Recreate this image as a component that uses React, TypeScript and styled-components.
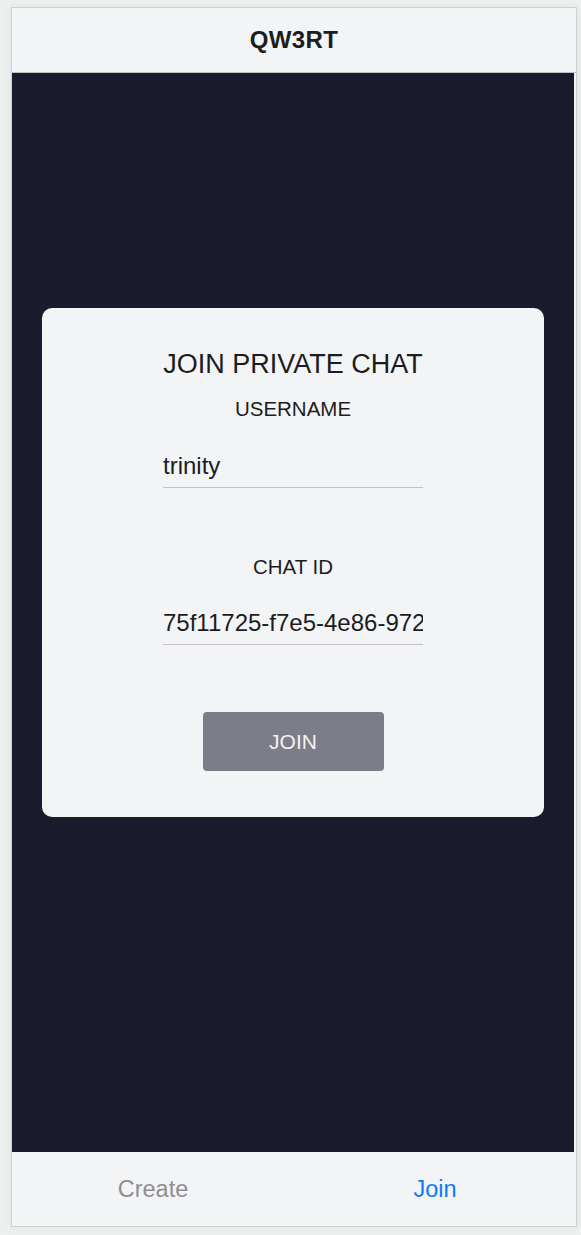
import React from "react";
import styled, { createGlobalStyle } from "styled-components";

const GlobalStyle = createGlobalStyle`
  html, body {
    margin: 0;
    padding: 0;
    background: #eef0ef;
    font-family: "Liberation Sans", Arial, Helvetica, sans-serif;
  }
  * { box-sizing: border-box; }
`;

const Page = styled.div`
  padding: 7px 4px 8px 11px;
`;

const Frame = styled.div`
  width: 566px;
  height: 1220px;
  border: 1px solid #cfd0d0;
  box-shadow: 0 0 10px rgba(0, 0, 0, 0.06);
  display: flex;
  flex-direction: column;
  background: #f3f4f6;
`;

const Header = styled.header`
  height: 65px;
  flex: none;
  display: flex;
  align-items: center;
  justify-content: center;
  background: #f3f4f6;
  border-bottom: 1px solid #bfc0c2;
  font-size: 24px;
  font-weight: 600;
  color: #1c1c1e;
  letter-spacing: 0.4px;
`;

const Main = styled.main`
  flex: 1;
  margin-right: 2px;
  background: #1a1b2d;
  padding: 235px 30px 0 30px;
`;

const Card = styled.section`
  background: #f3f4f6;
  border-radius: 10px;
  padding: 41px 0 46px;
  display: flex;
  flex-direction: column;
  align-items: center;
`;

const Column = styled.div`
  width: 260px;
  display: flex;
  flex-direction: column;
  align-items: stretch;
`;

const Title = styled.h1`
  margin: 0;
  font-size: 27px;
  font-weight: 400;
  line-height: 30px;
  color: #1c1c1e;
  text-align: center;
  white-space: nowrap;
`;

const Label = styled.label<{ $gap: number }>`
  display: block;
  margin-top: ${(p) => p.$gap}px;
  font-size: 20.5px;
  line-height: 24px;
  color: #1c1c1e;
  text-align: center;
`;

const Input = styled.input<{ $gap: number }>`
  display: block;
  width: 100%;
  height: 44px;
  margin-top: ${(p) => p.$gap}px;
  padding: 0;
  border: none;
  border-bottom: 1px solid #c4c4c6;
  background: transparent;
  font-family: inherit;
  font-size: 24px;
  color: #1c1c1e;
  outline: none;
`;

const Button = styled.button`
  align-self: center;
  width: 181px;
  height: 59px;
  margin-top: 67px;
  border: none;
  border-radius: 4px;
  background: #7d7d89;
  color: #f2f2f4;
  font-family: inherit;
  font-size: 21px;
`;

const TabBar = styled.nav`
  height: 74px;
  flex: none;
  display: grid;
  grid-template-columns: 1fr 1fr;
  background: #f3f4f6;
`;

const Tab = styled.div<{ $active?: boolean }>`
  display: flex;
  align-items: center;
  justify-content: center;
  font-size: 23.5px;
  color: ${(p) => (p.$active ? "#0a7aff" : "#8e8e93")};
`;

export default function App() {
  return (
    <>
      <GlobalStyle />
      <Page>
        <Frame>
          <Header>QW3RT</Header>
          <Main>
            <Card>
              <Column>
                <Title>JOIN PRIVATE CHAT</Title>
                <Label $gap={18}>USERNAME</Label>
                <Input $gap={23} defaultValue="trinity" />
                <Label $gap={67}>CHAT ID</Label>
                <Input $gap={22} defaultValue="75f11725-f7e5-4e86-9723-1c8b5a2e0d41" />
                <Button>JOIN</Button>
              </Column>
            </Card>
          </Main>
          <TabBar>
            <Tab>Create</Tab>
            <Tab $active>Join</Tab>
          </TabBar>
        </Frame>
      </Page>
    </>
  );
}
